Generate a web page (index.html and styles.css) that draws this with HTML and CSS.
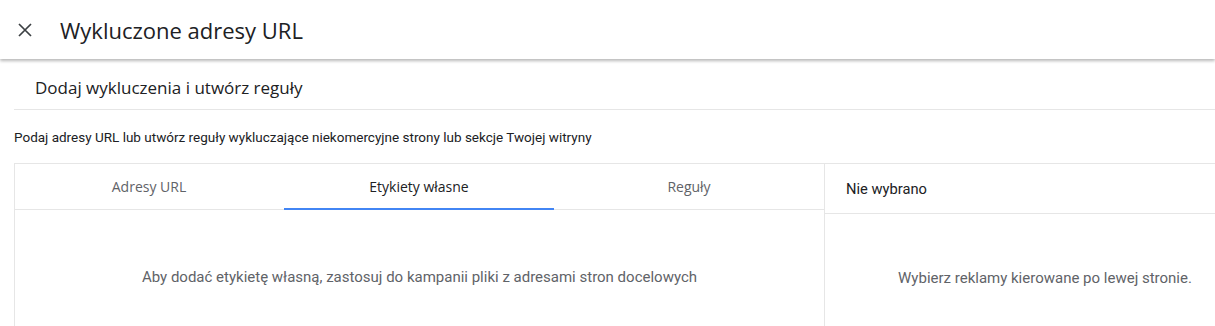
FILE: index.html
```html
<!DOCTYPE html>
<html lang="pl">
<head>
<meta charset="utf-8">
<title>Wykluczone adresy URL</title>
<link rel="stylesheet" href="styles.css">
</head>
<body>
<header class="topbar">
  <button class="close" aria-label="Zamknij">
    <svg width="14" height="14" viewBox="0 0 14 14"><path d="M1 1 L13 13 M13 1 L1 13" stroke="#3c4043" stroke-width="1.7" fill="none"/></svg>
  </button>
  <h1 class="title">Wykluczone adresy URL</h1>
</header>
<main class="content">
  <div class="section-head">
    <h2 class="section-title">Dodaj wykluczenia i utwórz reguły</h2>
  </div>
  <p class="desc">Podaj adresy URL lub utwórz reguły wykluczające niekomercyjne strony lub sekcje Twojej witryny</p>
  <div class="box">
    <div class="left">
      <nav class="tabs">
        <div class="tab">Adresy URL</div>
        <div class="tab active">Etykiety własne</div>
        <div class="tab">Reguły</div>
      </nav>
      <div class="left-body">Aby dodać etykietę własną, zastosuj do kampanii pliki z adresami stron docelowych</div>
    </div>
    <div class="right">
      <div class="right-head">Nie wybrano</div>
      <div class="right-body">Wybierz reklamy kierowane po lewej stronie.</div>
    </div>
  </div>
</main>
</body>
</html>
```
FILE: styles.css
```css
html, body {
  margin: 0;
  padding: 0;
  background: #fff;
  overflow: hidden;
  width: 1215px;
  height: 326px;
}
body {
  font-family: Roboto, "Liberation Sans", Arial, sans-serif;
  color: #202124;
}
.topbar {
  height: 59px;
  display: flex;
  align-items: center;
  background: #fff;
  box-shadow: 0 2px 3px rgba(0,0,0,0.28);
  position: relative;
  z-index: 1;
}
.close {
  border: 0;
  background: none;
  padding: 0;
  margin: 1px 0 0 18px;
  width: 14px;
  height: 14px;
  display: flex;
}
.title {
  margin: 0 0 0 28px;
  font-family: "Open Sans", Roboto, sans-serif;
  font-weight: 400;
  font-size: 22px;
  color: #202124;
}
.content {
  padding-left: 14px;
}
.section-head {
  height: 51px;
  padding-top: 6px;
  border-bottom: 1px solid #e6e6e6;
  display: flex;
  align-items: center;
  box-sizing: border-box;
}
.section-title {
  margin: 0 0 0 21px;
  font-family: "Open Sans", Roboto, sans-serif;
  font-weight: 400;
  font-size: 17px;
  color: #202124;
}
.desc {
  margin: 0;
  height: 53px;
  display: flex;
  align-items: center;
  font-size: 13.5px;
  color: #202124;
}
.box {
  display: flex;
  width: 1250px;
  height: 162px;
  border-top: 1px solid #e6e6e6;
  border-left: 1px solid #e6e6e6;
}
.left {
  width: 809px;
  border-right: 1px solid #e6e6e6;
  display: flex;
  flex-direction: column;
}
.tabs {
  display: grid;
  grid-template-columns: 1fr 1fr 1fr;
  height: 46px;
  border-bottom: 1px solid #e6e6e6;
  box-sizing: border-box;
  margin-left: -1px;
}
.tab {
  display: flex;
  align-items: center;
  justify-content: center;
  font-family: "Open Sans", Roboto, sans-serif;
  font-size: 14px;
  color: #5f6368;
  box-sizing: border-box;
}
.tab.active {
  color: #202124;
  border-bottom: 2px solid #4285f4;
  margin-bottom: -1px;
}
.left-body {
  padding-top: 57px;
  line-height: 20px;
  text-align: center;
  font-size: 15px;
  color: #5f6368;
}
.right {
  flex: 1;
  display: flex;
  flex-direction: column;
}
.right-head {
  height: 50px;
  border-bottom: 1px solid #e6e6e6;
  box-sizing: border-box;
  display: flex;
  align-items: center;
  padding-left: 21px;
  font-size: 14.7px;
  color: #202124;
}
.right-body {
  padding-top: 54px;
  line-height: 20px;
  text-align: center;
  font-size: 15px;
  color: #5f6368;
}
```
